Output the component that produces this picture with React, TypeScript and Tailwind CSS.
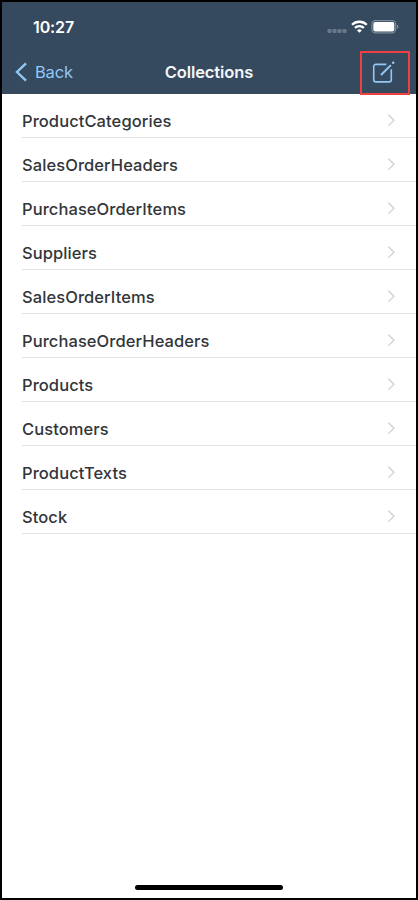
const collections = [
  'ProductCategories',
  'SalesOrderHeaders',
  'PurchaseOrderItems',
  'Suppliers',
  'SalesOrderItems',
  'PurchaseOrderHeaders',
  'Products',
  'Customers',
  'ProductTexts',
  'Stock',
];

function StatusBar() {
  return (
    <div className="flex h-[49px] items-center justify-between pl-[31px] pr-[16px]">
      <span className="pt-[1px] text-[16px] font-semibold leading-5 tracking-[-0.1px] text-white">10:27</span>
      <svg width="73" height="16" viewBox="0 0 73 16" fill="none">
        <g fill="#6a7989">
          <rect x="0.5" y="10" width="4" height="4" rx="1.3" />
          <rect x="5.5" y="10" width="4" height="4" rx="1.3" />
          <rect x="10.5" y="10" width="4" height="4" rx="1.3" />
          <rect x="15.5" y="10" width="4" height="4" rx="1.3" />
        </g>
        <g stroke="#fff" strokeWidth="2.3">
          <path d="M25 5.8a10.5 10.5 0 0 1 14.8 0" />
          <path d="M27.9 8.9a6.4 6.4 0 0 1 9 0" />
        </g>
        <path d="M30 11.4a3.5 3.5 0 0 1 4.8 0L32.4 13.8z" fill="#fff" />
        <rect x="44.9" y="1.6" width="23.8" height="12.3" rx="3.6" stroke="#7e8b99" strokeWidth="1.2" />
        <rect x="46.3" y="3" width="21" height="9.5" rx="2" fill="#fff" />
        <path d="M70 5.7v4.2c2-.6 2-3.6 0-4.2z" fill="#7e8b99" />
      </svg>
    </div>
  );
}

function NavBar() {
  return (
    <div className="grid h-[43px] grid-cols-[1fr_auto_1fr] items-center">
      <button className="flex h-[43px] items-center pl-[13px] text-[#91c8f6]">
        <svg width="13" height="20" viewBox="0 0 13 20" fill="none" className="mt-[-2px]">
          <path d="M11 1.3L2 10l9 8.7" stroke="currentColor" strokeWidth="2.4" />
        </svg>
        <span className="mt-[-2px] ml-[7px] text-[16.5px] leading-5 tracking-[-0.2px]">Back</span>
      </button>
      <h1 className="mt-[-2px] text-[16.5px] font-semibold leading-5 tracking-[-0.1px] text-[#f5f6f7]">Collections</h1>
      <div className="flex justify-end pr-[6px]">
        <button className="flex h-[44px] w-[50px] items-center justify-center border-2 border-[#ee3f43] text-[#91c8f6]">
          <svg width="24" height="24" viewBox="0 0 24 24" fill="none" stroke="currentColor" strokeWidth="1.6" className="mr-[4px] mt-[-1px]">
            <path d="M15.3 3.4H4.9a2.2 2.2 0 0 0-2.2 2.2v13.1a2.2 2.2 0 0 0 2.2 2.2h13.2a2.2 2.2 0 0 0 2.2-2.2V8.2" />
            <path d="M10 14L19.9 4.1" strokeWidth="2" />
            <circle cx="22.2" cy="1.8" r="1.3" fill="currentColor" stroke="none" />
          </svg>
        </button>
      </div>
    </div>
  );
}

export default function App() {
  return (
    <div className="flex h-[900px] w-[418px] flex-col border-2 border-black bg-white font-['Inter','Liberation_Sans',sans-serif]">
      <header className="h-[92px] shrink-0 bg-[#364a5f]">
        <StatusBar />
        <NavBar />
      </header>
      <ul className="flex-1">
        {collections.map((name) => (
          <li key={name} className="ml-[20px] flex h-11 items-center justify-between border-b border-[#e1e2e3] pr-[20px] pt-[10px]">
            <span className="text-[16.5px] font-medium leading-5 tracking-[0.08px] text-[#32363a]">{name}</span>
            <svg width="9" height="14" viewBox="0 0 9 14" fill="none" className="mt-[-1px]">
              <path d="M1.4 1.8L7 7.2l-5.6 5.4" stroke="#cfd0d2" strokeWidth="1.3" />
            </svg>
          </li>
        ))}
      </ul>
      <div className="mx-auto mb-[8px] h-[5px] w-[148px] rounded-full bg-black" />
    </div>
  );
}
